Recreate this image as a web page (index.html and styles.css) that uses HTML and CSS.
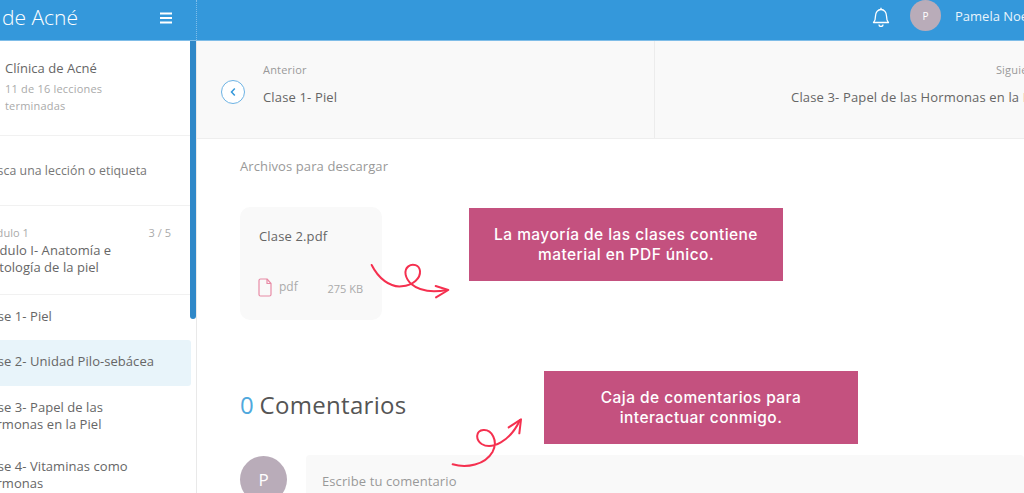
FILE: index.html
```html
<!DOCTYPE html>
<html lang="es">
<head>
<meta charset="utf-8">
<title>Clínica de Acné</title>
<link rel="stylesheet" href="styles.css">
</head>
<body>
<div class="page">
  <header class="topbar">
    <div class="brand">
      <span class="brand-name">de Acné</span>
      <svg class="burger" viewBox="0 0 12 12" width="12" height="12"><path d="M0 1.5h12M0 6h12M0 10.5h12" stroke="#fff" stroke-width="1.8"/></svg>
    </div>
    <div class="user">
      <svg class="bell" viewBox="0 0 18 20" width="18" height="20" fill="none" stroke="#fff" stroke-width="1.3" stroke-linejoin="round"><path d="M1.5 15.5c1.5-1.5 2-3 2-6.5 0-3.5 2.3-6.5 5.500-6.500s5.500 3 5.500 6.500c0 3.500.5 5 2 6.500z"/><path d="M7 17.500a2 2 0 0 0 4 0"/><path d="M9 .8v1.700"/></svg>
      <span class="avatar avatar-small">P</span>
      <span class="user-name">Pamela Noe</span>
    </div>
  </header>
  <div class="body">
    <aside class="sidebar">
      <div class="side-inner">
        <section class="course">
          <div class="course-name">Clínica de Acné</div>
          <div class="course-progress">11 de 16 lecciones terminadas</div>
        </section>
        <section class="search">Busca una lección o etiqueta</section>
        <section class="module">
          <div class="module-top"><span>Módulo 1</span><span class="module-count">3 / 5</span></div>
          <div class="module-title">Módulo I- Anatomía e Histología de la piel</div>
        </section>
        <ul class="lessons">
          <li class="lesson lesson-first">Clase 1- Piel</li>
          <li class="lesson lesson-active">Clase 2- Unidad Pilo-sebácea</li>
          <li class="lesson lesson-third">Clase 3- Papel de las Hormonas en la Piel</li>
          <li class="lesson">Clase 4- Vitaminas como Hormonas</li>
        </ul>
      </div>
      <div class="scroll-thumb"></div>
    </aside>
    <main class="content">
      <nav class="pager">
        <div class="pager-prev">
          <span class="pager-circle"><svg viewBox="0 0 8 10" width="8" height="10" fill="none" stroke="#3498db" stroke-width="1.500"><path d="M5.800 1.500 2.500 5l3.300 3.500"/></svg></span>
          <div>
            <div class="pager-label">Anterior</div>
            <div class="pager-title">Clase 1- Piel</div>
          </div>
        </div>
        <div class="pager-next">
          <div class="pager-label">Siguiente</div>
          <div class="pager-title">Clase 3- Papel de las Hormonas en la Piel</div>
        </div>
      </nav>
      <section class="downloads">
        <h2 class="downloads-title">Archivos para descargar</h2>
        <div class="file-card">
          <div class="file-name">Clase 2.pdf</div>
          <div class="file-meta">
            <svg class="file-icon" viewBox="0 0 14 19" width="14" height="19" fill="none" stroke="#e88ba6" stroke-width="1.200" stroke-linejoin="round"><path d="M1 2.500A1.500 1.500 0 0 1 2.500 1H9l4 4.500V16.500a1.500 1.500 0 0 1-1.500 1.500h-9A1.500 1.500 0 0 1 1 16.500z"/><path d="M9 1v4.500h4"/></svg>
            <span class="file-type">pdf</span>
            <span class="file-size">275 KB</span>
          </div>
        </div>
      </section>
      <section class="comments">
        <h2 class="comments-title"><span class="comments-count">0</span> Comentarios</h2>
        <div class="comment-form">
          <span class="avatar avatar-large">P</span>
          <div class="comment-box">Escribe tu comentario</div>
        </div>
      </section>
    </main>
  </div>

  <div class="callout callout-files">La mayoría de las clases contiene material en PDF único.</div>
  <div class="callout callout-comments">Caja de comentarios para interactuar conmigo.</div>

  <svg class="squiggle squiggle-files" viewBox="0 0 720 405" width="240" height="135" fill="none" stroke="#f5304f" stroke-width="6" stroke-linecap="round" stroke-linejoin="round">
    <path d="M425 210C445 250 480 278 515 274C550 270 572 250 570 228C568 210 548 204 535 214C520 226 525 250 545 268C570 290 610 292 652 285"/>
    <path d="M617 273 655 285 618 307"/>
  </svg>
  <svg class="squiggle squiggle-comments" viewBox="0 0 960 369" width="320" height="123" fill="none" stroke="#f5304f" stroke-width="6" stroke-linecap="round" stroke-linejoin="round">
    <path d="M668 283C710 295 765 285 788 245C805 212 785 178 760 180C738 182 735 208 755 222C785 240 840 215 870 150"/>
    <path d="M836 172 873 148 868 190"/>
  </svg>
</div>
</body>
</html>
```
FILE: styles.css
```css
* { box-sizing: border-box; }
html, body { margin: 0; padding: 0; height: 100%; overflow: hidden; background: #fff; }
body { font-family: "Open Sans", "Liberation Sans", sans-serif; color: #666; }

.page { position: relative; width: 1024px; height: 493px; overflow: hidden; display: flex; flex-direction: column; }

/* top bar */
.topbar { flex: none; height: 41px; background: #3498db; color: #fff; display: flex; border-bottom: 1px solid #7fbde8; }
.brand { flex: none; width: 197px; padding: 0 24px 0 2px; display: flex; align-items: center; justify-content: space-between; border-right: 1px dotted #7fbde8; }
.brand-name { font-size: 21px; font-weight: 300; line-height: 34px; margin-top: -6px; }
.burger { margin-top: -5px; }
.user { flex: 1; display: flex; align-items: flex-start; padding-left: 675px; white-space: nowrap; }
.bell { margin-top: 7px; }
.avatar { display: flex; align-items: center; justify-content: center; border-radius: 50%; background: #b9acb9; color: #fff; flex: none; }
.avatar-small { width: 31px; height: 31px; font-size: 10px; margin-left: 20px; }
.user-name { font-size: 13px; line-height: 32px; margin-left: 14px; color: #e8f4fc; }

/* layout */
.body { flex: 1; display: flex; min-height: 0; }

/* sidebar */
.sidebar { flex: none; width: 197px; position: relative; overflow: hidden; border-right: 1px solid #e9e9e9; }
.side-inner { width: 211px; margin-left: -20px; letter-spacing: .05px; }
.course { height: 95px; padding: 18px 20px 0 25px; border-bottom: 1px solid #f1f1f1; }
.course-name { font-size: 13px; line-height: 18px; color: #666; }
.course-progress { font-size: 11px; line-height: 17px; color: #aaa; margin-top: 3px; width: 125px; letter-spacing: .2px; }
.search { height: 70px; padding: 26px 0 0 2px; font-size: 12.300px; line-height: 18px; color: #777; border-bottom: 1px solid #f1f1f1; }
.module { height: 89px; padding-top: 19px; padding-right: 20px; border-bottom: 1px solid #f1f1f1; }
.module-top { display: flex; justify-content: space-between; font-size: 11px; line-height: 16px; color: #aaa; }
.module-title { font-size: 13px; line-height: 17px; color: #666; margin-top: 1px; width: 140px; }
.lessons { list-style: none; margin: 0 0 0 -1px; padding: 0; }
.lesson { font-size: 13px; line-height: 17px; color: #666; width: 150px; }
.lesson-first { padding-top: 13px; padding-bottom: 15px; }
.lesson-active { background: #e8f4fa; height: 46px; padding-top: 13px; border-radius: 3px; width: 212px; }
.lesson-third { padding-top: 13px; padding-bottom: 25px; }
.scroll-thumb { position: absolute; right: 0; top: 0; width: 6px; height: 278px; background: #2f88c8; border-radius: 0 0 3px 3px; }

/* content */
.content { flex: 1; min-width: 0; display: flex; flex-direction: column; }
.pager { flex: none; height: 98px; background: #f9f9f9; border-bottom: 1px solid #eee; display: flex; }
.pager-prev { width: 458px; flex: none; display: flex; align-items: flex-start; gap: 18px; padding: 21px 0 0 24px; border-right: 1px solid #ececec; }
.pager-circle { width: 24px; height: 24px; margin-top: 18px; border: 1px solid #6db3e4; border-radius: 50%; display: flex; align-items: center; justify-content: center; flex: none; background: #fff; }
.pager-label { font-size: 11px; line-height: 16px; color: #999; letter-spacing: .2px; }
.pager-title { font-size: 13px; line-height: 18px; color: #666; margin-top: 10px; white-space: nowrap; letter-spacing: .15px; }
.pager-next { flex: none; width: 390px; text-align: right; padding-top: 21px; }

.downloads { padding: 0 0 0 43px; }
.downloads-title { font-size: 13px; font-weight: 400; line-height: 18px; color: #999; margin: 18px 0 0; letter-spacing: .1px; }
.file-card { width: 142px; height: 113px; margin-top: 32px; background: #f9f9f9; border-radius: 10px; padding: 20px 19px 0; display: flex; flex-direction: column; }
.file-name { font-size: 13px; line-height: 18px; color: #666; letter-spacing: .15px; }
.file-meta { display: flex; align-items: center; margin-top: 33px; margin-left: -1px; }
.file-type { font-size: 12px; color: #aaa; margin-left: 7px; margin-top: -3px; }
.file-size { font-size: 11px; color: #aaa; margin-left: auto; margin-top: 1px; }

.comments { padding: 0 0 0 43px; }
.comments-title { font-size: 24px; font-weight: 400; line-height: 32px; color: #555; margin: 69px 0 0; letter-spacing: .3px; word-spacing: -1px; }
.comments-count { color: #4fa8dd; }
.comment-form { display: flex; gap: 19px; margin-top: 34px; }
.avatar-large { width: 47px; height: 47px; font-size: 17px; margin-top: 1px; }
.comment-box { flex: 1; height: 70px; background: #f9f9f9; border-radius: 4px; padding: 17px 16px; font-size: 13px; line-height: 18px; color: #999; letter-spacing: .1px; }

/* annotations laid over the page */
.callout { position: absolute; width: 314px; height: 73px; background: #c4517f; color: #fff; font-family: Inter, "DejaVu Sans", sans-serif; font-size: 15.500px; letter-spacing: .45px; line-height: 20px; font-weight: 500; display: flex; align-items: center; justify-content: center; text-align: center; padding: 0 24px; }
.callout-files { left: 469px; top: 208px; }
.callout-comments { left: 544px; top: 371px; padding: 0 50px; }
.squiggle { position: absolute; pointer-events: none; }
.squiggle-files { left: 230px; top: 195px; }
.squiggle-comments { left: 230px; top: 370px; }
```
